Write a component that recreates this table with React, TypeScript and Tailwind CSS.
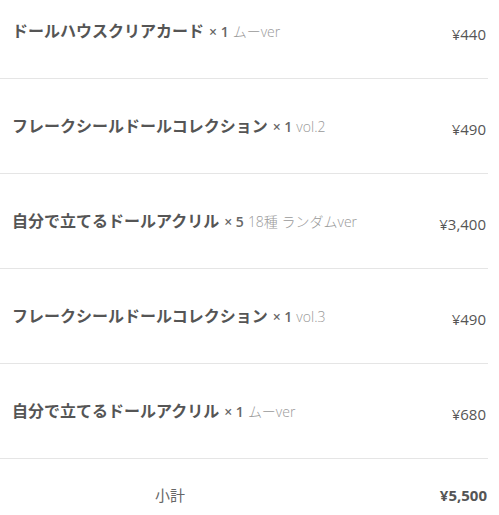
const items = [
  { name: 'ドールハウスクリアカード', qty: 1, variant: 'ムーver', price: '¥440' },
  { name: 'フレークシールドールコレクション', qty: 1, variant: 'vol.2', price: '¥490' },
  { name: '自分で立てるドールアクリル', qty: 5, variant: '18種 ランダムver', price: '¥3,400' },
  { name: 'フレークシールドールコレクション', qty: 1, variant: 'vol.3', price: '¥490' },
  { name: '自分で立てるドールアクリル', qty: 1, variant: 'ムーver', price: '¥680' },
]

export default function App() {
  return (
    <div className="h-[515px] w-[499px] overflow-hidden bg-white font-['Open_Sans','Noto_Sans_CJK_JP',sans-serif] text-[#555]">
      <div className="-mt-[16px] w-[488px]">
        {items.map((item, i) => (
          <div key={i} className="flex h-[95px] items-center justify-between border-b border-[#e5e5e5] pl-[12px] pr-[2px]">
            <div className="flex items-baseline">
              <span className="text-[16px] font-bold">{item.name}</span>
              <span className="ml-[5px] text-[14px] font-semibold text-[#666]">× {item.qty}</span>
              <span className="ml-[4px] text-[14px] font-light text-[#999]">{item.variant}</span>
            </div>
            <span className="mt-[6px] text-[15px]">{item.price}</span>
          </div>
        ))}
        <div className="flex h-[73px] items-center justify-between pr-[1px]">
          <span className="w-[340px] text-center text-[15px] text-[#666]">小計</span>
          <span className="text-[15px] font-bold">¥5,500</span>
        </div>
      </div>
    </div>
  )
}
